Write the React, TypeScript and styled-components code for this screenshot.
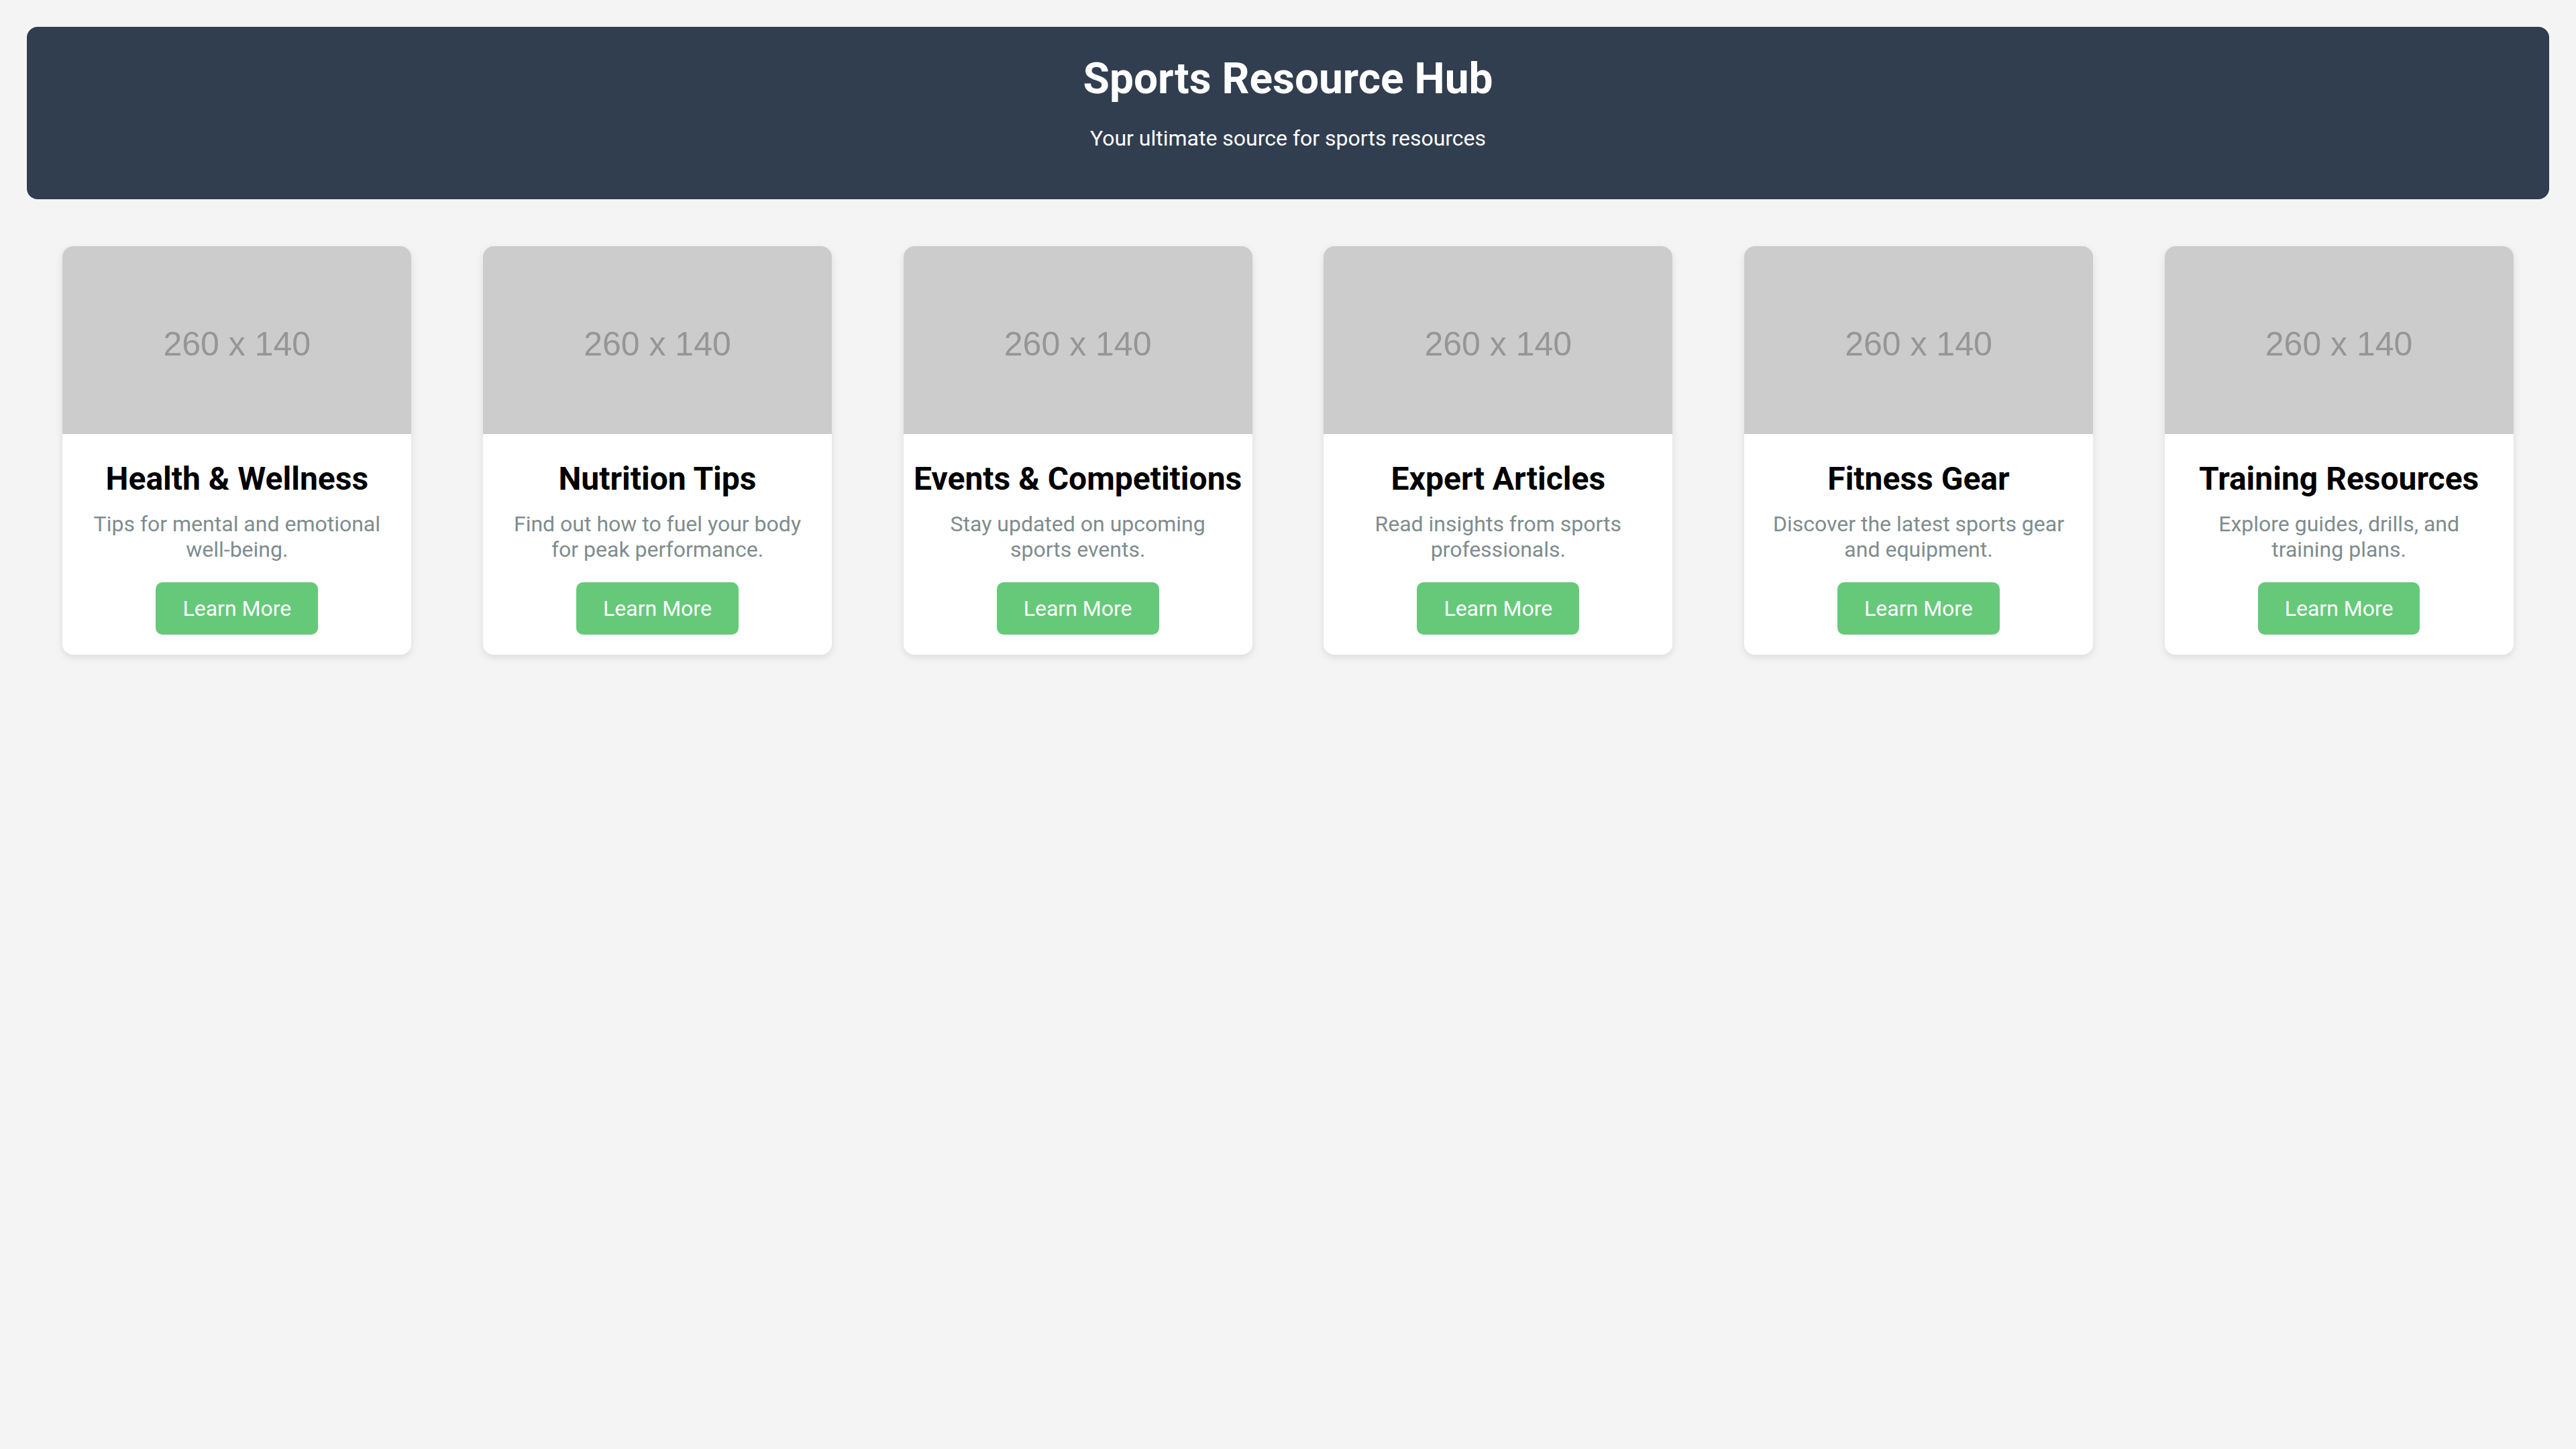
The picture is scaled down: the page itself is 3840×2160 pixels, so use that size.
import React from "react";
import styled, { createGlobalStyle } from "styled-components";

const GlobalStyle = createGlobalStyle`
  html, body {
    margin: 0;
    padding: 0;
    background: #f4f4f4;
  }
  body {
    font-family: Roboto, "Noto Sans", "Liberation Sans", sans-serif;
    color: #000;
  }
  * {
    box-sizing: border-box;
  }
`;

const Page = styled.div`
  padding: 40px;
  min-height: 2160px;
`;

const Header = styled.header`
  background: #313e50;
  color: #ffffff;
  padding: 40px;
  border-radius: 16px;
  text-align: center;
  margin-bottom: 40px;
`;

const HeaderTitle = styled.h1`
  margin: 0;
  font-size: 64px;
  font-weight: 700;
  line-height: normal;
`;

const HeaderSubtitle = styled.p`
  margin: 32px 0;
  font-size: 32px;
  line-height: normal;
`;

const CardGrid = styled.section`
  display: flex;
  flex-wrap: wrap;
  justify-content: space-around;
`;

const Card = styled.article`
  width: 520px;
  margin: 30px;
  background: #ffffff;
  border-radius: 16px;
  overflow: hidden;
  box-shadow: 0 4px 12px rgba(0, 0, 0, 0.1);
  display: flex;
  flex-direction: column;
`;

const Placeholder = styled.div`
  height: 280px;
  background: #cccccc;
  color: #969696;
  font-family: "Liberation Sans", Arial, sans-serif;
  font-size: 50px;
  display: flex;
  align-items: center;
  justify-content: center;
  padding-top: 12px;
`;

const CardBody = styled.div`
  padding: 30px 14px;
  display: flex;
  flex-direction: column;
  align-items: center;
  text-align: center;
`;

const CardTitle = styled.h2`
  margin: 8px 0 20px;
  font-size: 48px;
  font-weight: 700;
  line-height: normal;
  color: #000000;
`;

const CardText = styled.p`
  margin: 0 0 30px;
  padding: 0 19px;
  font-size: 32px;
  line-height: normal;
  color: #7f8c8d;
`;

const LearnButton = styled.a`
  display: inline-block;
  background: #66c97a;
  color: #ffffff;
  font-size: 32px;
  line-height: normal;
  padding: 20px 40px;
  border-radius: 10px;
  text-decoration: none;
  cursor: pointer;
`;

const resources = [
  { title: "Health & Wellness", text: "Tips for mental and emotional well-being." },
  { title: "Nutrition Tips", text: "Find out how to fuel your body for peak performance." },
  { title: "Events & Competitions", text: "Stay updated on upcoming sports events." },
  { title: "Expert Articles", text: "Read insights from sports professionals." },
  { title: "Fitness Gear", text: "Discover the latest sports gear and equipment." },
  { title: "Training Resources", text: "Explore guides, drills, and training plans." },
];

export default function App() {
  return (
    <>
      <GlobalStyle />
      <Page>
        <Header>
          <HeaderTitle>Sports Resource Hub</HeaderTitle>
          <HeaderSubtitle>Your ultimate source for sports resources</HeaderSubtitle>
        </Header>
        <CardGrid>
          {resources.map((r) => (
            <Card key={r.title}>
              <Placeholder>260 x 140</Placeholder>
              <CardBody>
                <CardTitle>{r.title}</CardTitle>
                <CardText>{r.text}</CardText>
                <LearnButton href="#">Learn More</LearnButton>
              </CardBody>
            </Card>
          ))}
        </CardGrid>
      </Page>
    </>
  );
}
